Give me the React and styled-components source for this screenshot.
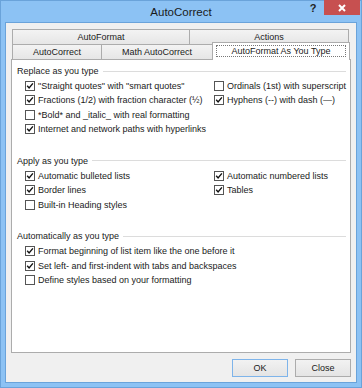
import styled, { createGlobalStyle } from 'styled-components'

const GlobalStyle = createGlobalStyle`
  html, body { margin: 0; padding: 0; background: #8cc2f4; }
  body { font-family: "Liberation Sans", Arial, sans-serif; }
`

const Window = styled.div`
  width: 362px;
  height: 388px;
  box-sizing: border-box;
  border: 1px solid #6aa3da;
  background: #8cc2f4;
  padding: 0 4px 4px;
  display: flex;
  flex-direction: column;
`

const TitleBar = styled.div`
  height: 20px;
  position: relative;
  display: flex;
  align-items: center;
  justify-content: center;
  font-size: 11.5px;
  color: #1a1a1a;
  padding-top: 1px;
`

const TitleButtons = styled.div`
  position: absolute;
  top: -1px;
  right: -3px;
  display: flex;
  align-items: flex-start;
`

const HelpButton = styled.div`
  width: 22px;
  height: 15px;
  font-size: 11px;
  font-weight: bold;
  color: #222;
  text-align: center;
  line-height: 16px;
`

const CloseButton = styled.div`
  width: 36px;
  height: 15px;
  background: #c75050;
  display: flex;
  align-items: center;
  justify-content: center;
`

const Body = styled.div`
  flex: 1;
  background: #f0f0f0;
  border: 1px solid #6aa3da;
  padding: 7px 5px 5px;
  display: flex;
  flex-direction: column;
`

const TabRow = styled.div`
  display: flex;
  align-items: flex-end;
  padding-left: 1px;
  height: ${p => p.$h}px;
`

const Tab = styled.div`
  box-sizing: border-box;
  width: ${p => p.$w}px;
  height: ${p => (p.$active ? 18 : 15)}px;
  margin-left: -1px;
  &:first-child { margin-left: 0; }
  border: 1px solid #acacac;
  border-bottom: none;
  background: ${p => (p.$active ? '#fff' : 'linear-gradient(#f3f3f3, #e6e6e6)')};
  font-size: 9px;
  color: #1a1a1a;
  display: flex;
  align-items: center;
  justify-content: center;
  position: relative;
  z-index: ${p => (p.$active ? 2 : 0)};
  margin-bottom: ${p => (p.$active ? '-1px' : '0')};
  padding: ${p => (p.$active ? '2px 3px 3px' : '0')};
`

const FocusRect = styled.div`
  width: 100%;
  height: 100%;
  box-sizing: border-box;
  border: 1px dotted #777;
  display: flex;
  align-items: center;
  justify-content: center;
`

const Panel = styled.div`
  flex: 1;
  background: #fff;
  border: 1px solid #acacac;
  padding: 5px 4px 0 5px;
  display: flex;
  flex-direction: column;
  gap: 18.4px;
`

const Section = styled.div`
  display: flex;
  flex-direction: column;
`

const GroupLabel = styled.div`
  height: 12px;
  display: flex;
  align-items: center;
  gap: 4px;
  font-size: 9px;
  color: #1a1a1a;
  white-space: nowrap;
  &::after {
    content: '';
    flex: 1;
    height: 1px;
    background: #dcdcdc;
  }
`

const Grid = styled.div`
  margin: 2px 0 0 8px;
  display: grid;
  grid-template-columns: 189px 1fr;
  grid-auto-rows: 14.33px;
`

const Option = styled.label`
  display: flex;
  align-items: center;
  gap: 3px;
  font-size: 9px;
  color: #1a1a1a;
  white-space: nowrap;
  grid-column: ${p => p.$col};
  grid-row: ${p => p.$row};
`

const Box = styled.svg`
  flex: none;
  display: block;
`

const Footer = styled.div`
  display: flex;
  justify-content: flex-end;
  gap: 7px;
  padding: 6px 0 0;
`

const Button = styled.div`
  box-sizing: border-box;
  width: 56px;
  height: 18px;
  border: 1px solid ${p => (p.$default ? '#7eb4ea' : '#acacac')};
  background: linear-gradient(#f2f2f2, #e4e4e4);
  font-size: 9px;
  color: #1a1a1a;
  display: flex;
  align-items: center;
  justify-content: center;
`

function Checkbox({ checked }) {
  return (
    <Box width="10" height="10" viewBox="0 0 10 10">
      <rect x="0.5" y="0.5" width="9" height="9" fill="#fff" stroke="#555" />
      {checked && (
        <path d="M2.2 4.8 L4.1 7 L7.9 2.4" fill="none" stroke="#111" strokeWidth="1.4" />
      )}
    </Box>
  )
}

const sections = [
  {
    title: 'Replace as you type',
    items: [
      ['"Straight quotes" with "smart quotes"', true, 1, 1],
      ['Fractions (1/2) with fraction character (½)', true, 1, 2],
      ['*Bold* and _italic_ with real formatting', false, 1, 3],
      ['Internet and network paths with hyperlinks', true, 1, 4],
      ['Ordinals (1st) with superscript', false, 2, 1],
      ['Hyphens (--) with dash (—)', true, 2, 2],
    ],
  },
  {
    title: 'Apply as you type',
    items: [
      ['Automatic bulleted lists', true, 1, 1],
      ['Border lines', true, 1, 2],
      ['Built-in Heading styles', false, 1, 3],
      ['Automatic numbered lists', true, 2, 1],
      ['Tables', true, 2, 2],
    ],
  },
  {
    title: 'Automatically as you type',
    items: [
      ['Format beginning of list item like the one before it', true, 1, 1],
      ['Set left- and first-indent with tabs and backspaces', true, 1, 2],
      ['Define styles based on your formatting', false, 1, 3],
    ],
  },
]

export default function App() {
  return (
    <>
      <GlobalStyle />
      <Window>
        <TitleBar>
          AutoCorrect
          <TitleButtons>
            <HelpButton>?</HelpButton>
            <CloseButton>
              <svg width="8" height="8" viewBox="0 0 8 8">
                <path d="M1 1 L7 7 M7 1 L1 7" stroke="#fff" strokeWidth="2" />
              </svg>
            </CloseButton>
          </TitleButtons>
        </TitleBar>
        <Body>
          <TabRow $h={14}>
            <Tab $w={178}>AutoFormat</Tab>
            <Tab $w={160}>Actions</Tab>
          </TabRow>
          <TabRow $h={15}>
            <Tab $w={90}>AutoCorrect</Tab>
            <Tab $w={112}>Math AutoCorrect</Tab>
            <Tab $w={138} $active>
              <FocusRect>AutoFormat As You Type</FocusRect>
            </Tab>
          </TabRow>
          <Panel>
            {sections.map(s => (
              <Section key={s.title}>
                <GroupLabel>{s.title}</GroupLabel>
                <Grid>
                  {s.items.map(([text, checked, col, row]) => (
                    <Option key={text} $col={col} $row={row}>
                      <Checkbox checked={checked} />
                      {text}
                    </Option>
                  ))}
                </Grid>
              </Section>
            ))}
          </Panel>
          <Footer>
            <Button $default>OK</Button>
            <Button>Close</Button>
          </Footer>
        </Body>
      </Window>
    </>
  )
}
